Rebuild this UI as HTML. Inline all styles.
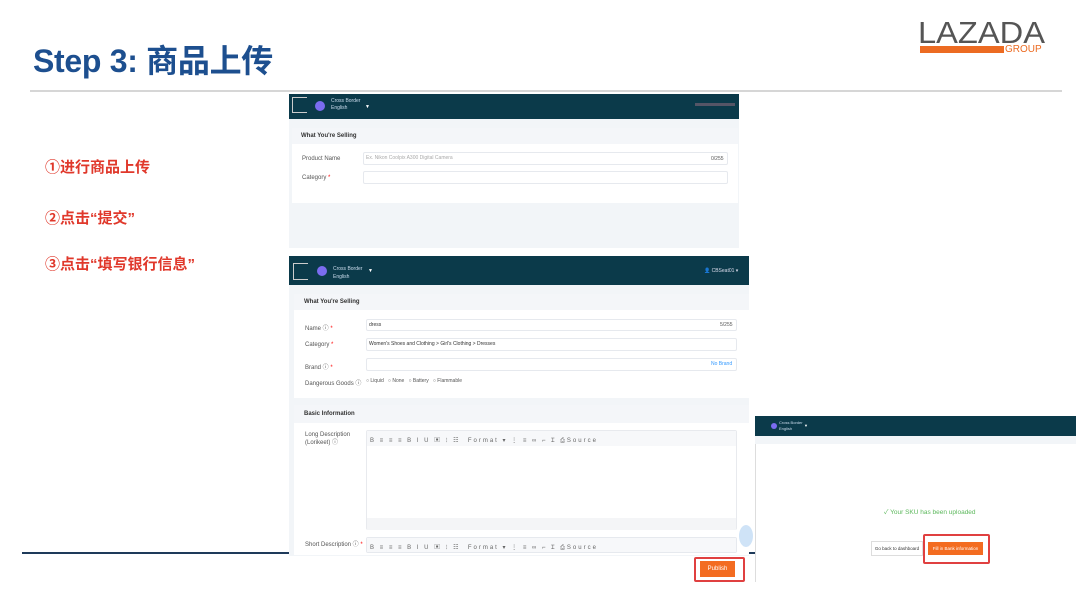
<!DOCTYPE html>
<html><head><meta charset="utf-8"><style>
*{margin:0;padding:0;box-sizing:border-box}
body{width:1080px;height:603px;background:#fff;position:relative;overflow:hidden;font-family:"Liberation Sans","Noto Sans CJK SC",sans-serif}
.a{position:absolute}
.t{font-size:6px;color:#555;white-space:nowrap}
.hdr{background:#0b3a4a}
.inp{background:#fff;border:1px solid #e6e9ee;border-radius:2px}
.red{color:#e0382b;font-weight:bold;font-size:15px}
.tb{font-size:6px;color:#666;letter-spacing:2px;white-space:nowrap}
</style></head><body>
<div class="a" style="left:22px;top:552px;width:733px;height:2px;background:#1e3a5a"></div>
<div class="a" style="left:33px;top:36px;font-size:32px;font-weight:bold;color:#1d4f8f;letter-spacing:-0.3px">Step 3: 商品上传</div>
<svg class="a" style="left:915px;top:12px" width="135" height="45"><text x="3" y="31" font-family="Liberation Sans" font-size="31" fill="#555" textLength="127" lengthAdjust="spacingAndGlyphs">LAZADA</text></svg>
<div class="a" style="left:920px;top:46px;width:84px;height:7px;background:#ec6b22"></div>
<div class="a" style="left:1005px;top:44px;font-size:10px;color:#ec6b22">GROUP</div>
<div class="a" style="left:30px;top:90px;width:1032px;height:2px;background:#d6d6d6"></div>

<div class="a red" style="left:45px;top:156px">①进行商品上传</div>
<div class="a red" style="left:45px;top:207px">②点击“提交”</div>
<div class="a red" style="left:45px;top:253px">③点击“填写银行信息”</div>

<!-- screenshot 1 -->
<div class="a" style="left:289px;top:94px;width:450px;height:154px;background:#f2f5f8"></div>
<div class="a hdr" style="left:289px;top:94px;width:450px;height:25px"></div>
<div class="a" style="left:292px;top:97px;width:15px;height:16px;border:1px solid #ccc;border-right:none"></div>
<div class="a" style="left:315px;top:101px;width:10px;height:10px;border-radius:50%;background:#7b6cf0"></div>
<div class="a t" style="left:331px;top:98px;color:#cde;font-size:5px;line-height:7px">Cross Border<br>English</div>
<div class="a" style="left:365px;top:104px;color:#fff;font-size:5px">▼</div>
<div class="a" style="left:695px;top:103px;width:40px;height:3px;background:#556"></div>
<div class="a" style="left:292px;top:128px;width:446px;height:75px;background:#fff"></div>
<div class="a" style="left:292px;top:128px;width:446px;height:16px;background:#f4f6f9"></div>
<div class="a t" style="left:301px;top:133px;font-weight:bold;color:#333">What You're Selling</div>
<div class="a t" style="left:302px;top:156px">Product Name</div>
<div class="a inp" style="left:363px;top:152px;width:365px;height:13px"></div>
<div class="a t" style="left:366px;top:155px;color:#aaa;font-size:5px">Ex. Nikon Coolpix A300 Digital Camera</div>
<div class="a t" style="left:711px;top:156px;font-size:5px">0/255</div>
<div class="a t" style="left:302px;top:175px">Category <span style="color:red">*</span></div>
<div class="a inp" style="left:363px;top:171px;width:365px;height:13px"></div>

<!-- screenshot 2 -->
<div class="a" style="left:289px;top:256px;width:460px;height:300px;background:#f2f5f8"></div>
<div class="a hdr" style="left:289px;top:256px;width:460px;height:29px"></div>
<div class="a" style="left:293px;top:263px;width:15px;height:17px;border:1px solid #ccc;border-right:none"></div>
<div class="a" style="left:317px;top:266px;width:10px;height:10px;border-radius:50%;background:#7b6cf0"></div>
<div class="a t" style="left:333px;top:265px;color:#cde;font-size:5px;line-height:8px">Cross Border<br>English</div>
<div class="a" style="left:368px;top:268px;color:#fff;font-size:5px">▼</div>
<div class="a t" style="left:704px;top:268px;color:#dde;font-size:5px">👤 CBSeat01 ▾</div>
<div class="a" style="left:294px;top:294px;width:455px;height:104px;background:#fff"></div>
<div class="a" style="left:294px;top:294px;width:455px;height:16px;background:#f4f6f9"></div>
<div class="a t" style="left:304px;top:299px;font-weight:bold;color:#333">What You're Selling</div>
<div class="a t" style="left:305px;top:323px">Name ⓘ <span style="color:red">*</span></div>
<div class="a inp" style="left:366px;top:319px;width:371px;height:12px"></div>
<div class="a t" style="left:369px;top:322px;font-size:5px;color:#333">dress</div>
<div class="a t" style="left:720px;top:322px;font-size:5px">5/255</div>
<div class="a t" style="left:305px;top:342px">Category <span style="color:red">*</span></div>
<div class="a inp" style="left:366px;top:338px;width:371px;height:13px"></div>
<div class="a t" style="left:369px;top:341px;font-size:5px;color:#333">Women's Shoes and Clothing &gt; Girl's Clothing &gt; Dresses</div>
<div class="a t" style="left:305px;top:362px">Brand ⓘ <span style="color:red">*</span></div>
<div class="a inp" style="left:366px;top:358px;width:371px;height:13px"></div>
<div class="a t" style="left:711px;top:361px;font-size:5px;color:#39f">No Brand</div>
<div class="a t" style="left:305px;top:378px">Dangerous Goods ⓘ</div>
<div class="a t" style="left:366px;top:378px;font-size:5px">○ Liquid &nbsp; ○ None &nbsp; ○ Battery &nbsp; ○ Flammable</div>
<div class="a" style="left:294px;top:405px;width:455px;height:150px;background:#fff"></div>
<div class="a" style="left:294px;top:405px;width:455px;height:18px;background:#f4f6f9"></div>
<div class="a t" style="left:304px;top:411px;font-weight:bold;color:#333">Basic Information</div>
<div class="a t" style="left:305px;top:431px;line-height:8px">Long Description<br>(Lorikeet) ⓘ</div>
<div class="a inp" style="left:366px;top:430px;width:371px;height:100px;border-color:#e8eaee"></div>
<div class="a" style="left:367px;top:431px;width:369px;height:15px;background:#f7f8fa"></div>
<div class="a tb" style="left:370px;top:435px">B ≡ ≡ ≡ B I U ▣ ⁝ ☷ &nbsp;Format ▾ ⋮ ≡ ∞ ⌐ Ɪ ⎙Source</div>
<div class="a" style="left:367px;top:518px;width:369px;height:12px;background:#f4f5f7"></div>
<div class="a t" style="left:305px;top:539px">Short Description ⓘ <span style="color:red">*</span></div>
<div class="a inp" style="left:366px;top:537px;width:371px;height:16px"></div>
<div class="a" style="left:367px;top:538px;width:369px;height:14px;background:#f7f8fa"></div>
<div class="a tb" style="left:370px;top:542px">B ≡ ≡ ≡ B I U ▣ ⁝ ☷ &nbsp;Format ▾ ⋮ ≡ ∞ ⌐ Ɪ ⎙Source</div>
<div class="a" style="left:739px;top:525px;width:14px;height:22px;border-radius:50%;background:#cfe3f7"></div>
<div class="a" style="left:694px;top:557px;width:51px;height:25px;border:2px solid #e04040;border-radius:2px"></div>
<div class="a" style="left:700px;top:561px;width:35px;height:16px;background:#f36c21;color:#fff;font-size:6px;text-align:center;line-height:16px">Publish</div>

<!-- screenshot 3 -->
<div class="a" style="left:755px;top:416px;width:321px;height:166px;background:#fff;border-left:1px solid #ddd"></div>
<div class="a hdr" style="left:755px;top:416px;width:321px;height:20px"></div>
<div class="a" style="left:755px;top:436px;width:321px;height:8px;background:#f2f5f8"></div>
<div class="a" style="left:771px;top:423px;width:6px;height:6px;border-radius:50%;background:#7b6cf0"></div>
<div class="a t" style="left:779px;top:420px;color:#cde;font-size:4px;line-height:6px">Cross Border<br>English</div>
<div class="a t" style="left:804px;top:423px;color:#fff;font-size:4px">▼</div>
<div class="a t" style="left:884px;top:506px;color:#5cb85c;font-size:6.5px">✓ Your SKU has been uploaded</div>
<div class="a" style="left:871px;top:541px;width:52px;height:15px;border:1px solid #ddd;font-size:4.5px;color:#333;text-align:center;line-height:13px;white-space:nowrap">Go back to dashboard</div>
<div class="a" style="left:923px;top:534px;width:67px;height:30px;border:2px solid #e04040;border-radius:2px"></div>
<div class="a" style="left:928px;top:542px;width:55px;height:13px;background:#f36c21;color:#fff;font-size:4.5px;text-align:center;line-height:13px;white-space:nowrap">Fill in Bank information</div>
</body></html>
